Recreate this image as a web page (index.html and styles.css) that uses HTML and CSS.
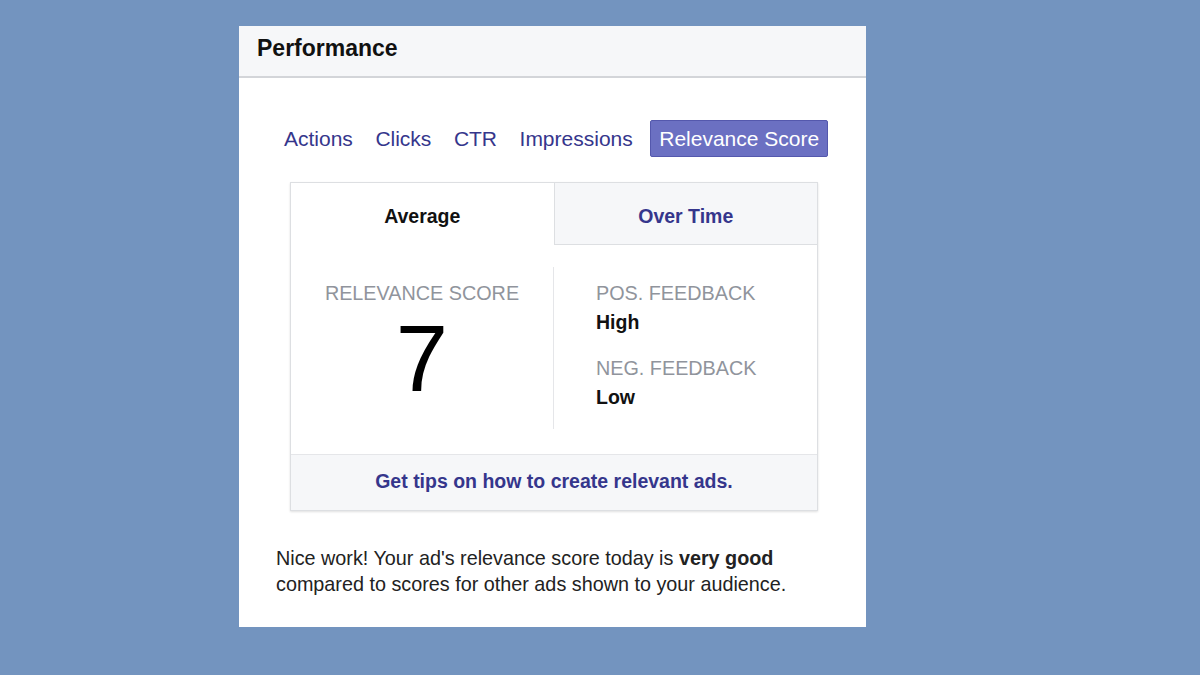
FILE: index.html
```html
<!DOCTYPE html>
<html lang="en">
<head>
    <meta charset="UTF-8">
    <meta name="viewport" content="width=device-width, initial-scale=1.0">
    <title>Performance</title>
    <link rel="stylesheet" href="styles.css">
</head>
<body>
    <div class="panel">
        <div class="panel-header">Performance</div>

        <div class="metric-tabs">
            <span class="metric-tab">Actions</span>
            <span class="metric-tab">Clicks</span>
            <span class="metric-tab">CTR</span>
            <span class="metric-tab">Impressions</span>
            <span class="metric-tab active">Relevance Score</span>
        </div>

        <div class="score-card">
            <div class="card-tabs">
                <div class="card-tab selected">Average</div>
                <div class="card-tab">Over Time</div>
            </div>
            <div class="card-body">
                <div class="score-col">
                    <div class="label">RELEVANCE SCORE</div>
                    <div class="score">7</div>
                </div>
                <div class="feedback-col">
                    <div class="label">POS. FEEDBACK</div>
                    <div class="value">High</div>
                    <div class="label second">NEG. FEEDBACK</div>
                    <div class="value">Low</div>
                </div>
            </div>
            <div class="card-footer">Get tips on how to create relevant ads.</div>
        </div>

        <p class="summary">Nice work! Your ad's relevance score today is <b>very good</b> compared to scores for other ads shown to your audience.</p>
    </div>
</body>
</html>
```

FILE: styles.css
```css
body {
    margin: 0;
    padding: 26px 0 0 239px;
    background-color: #7394bf;
    font-family: "Liberation Sans", Arial, sans-serif;
    height: 675px;
    box-sizing: border-box;
    overflow: hidden;
}

.panel {
    width: 627px;
    height: 601px;
    background-color: #fff;
    box-sizing: border-box;
}

.panel-header {
    height: 50px;
    line-height: 44px;
    padding-left: 18px;
    background-color: #f6f7f9;
    border-bottom: 2px solid #d3d5d9;
    font-size: 23px;
    font-weight: bold;
    color: #111;
}

.metric-tabs {
    display: flex;
    gap: 4.5px;
    margin: 42px 0 0 36px;
}

.metric-tab {
    padding: 0 8px;
    height: 37px;
    line-height: 35px;
    font-size: 21px;
    color: #35368c;
    border: 1px solid transparent;
    border-radius: 2px;
    box-sizing: border-box;
}

.metric-tab.active {
    margin-left: 4px;
    background-color: #6b70c2;
    border-color: #5458ad;
    color: #fff;
}

.score-card {
    width: 528px;
    margin: 25px 0 0 51px;
    border: 1px solid #dddfe2;
    box-shadow: 0 1px 2px rgba(0, 0, 0, 0.12);
    box-sizing: border-box;
}

.card-tabs {
    display: flex;
    height: 62px;
}

.card-tab {
    flex: 1;
    text-align: center;
    line-height: 66px;
    font-size: 19.5px;
    font-weight: bold;
    color: #35368c;
    background-color: #f6f7f9;
    border-left: 1px solid #dddfe2;
    border-bottom: 1px solid #dddfe2;
}

.card-tab.selected {
    color: #111;
    background-color: #fff;
    border-left: none;
    border-bottom: none;
}

.card-body {
    display: flex;
    height: 209px;
    padding: 22px 0 25px;
    box-sizing: border-box;
}

.score-col {
    width: 262px;
    border-right: 1px solid #e5e6e9;
    text-align: center;
}

.feedback-col {
    padding-left: 42px;
}

.label {
    font-size: 19.8px;
    color: #90949c;
    margin-top: 14px;
    line-height: 24px;
}

.label.second {
    margin-top: 22px;
}

.value {
    font-size: 19.5px;
    font-weight: bold;
    color: #111;
    margin-top: 5px;
    line-height: 24px;
}

.score {
    font-size: 94px;
    line-height: 100px;
    color: #000;
    margin-top: 4px;
}

.card-footer {
    height: 55px;
    line-height: 52px;
    text-align: center;
    border-top: 1px solid #e5e6e9;
    background-color: #f6f7f9;
    font-size: 19.5px;
    font-weight: bold;
    color: #35368c;
}

.summary {
    margin: 34px 0 0 37px;
    width: 540px;
    font-size: 19.8px;
    line-height: 26px;
    color: #222;
}
```
